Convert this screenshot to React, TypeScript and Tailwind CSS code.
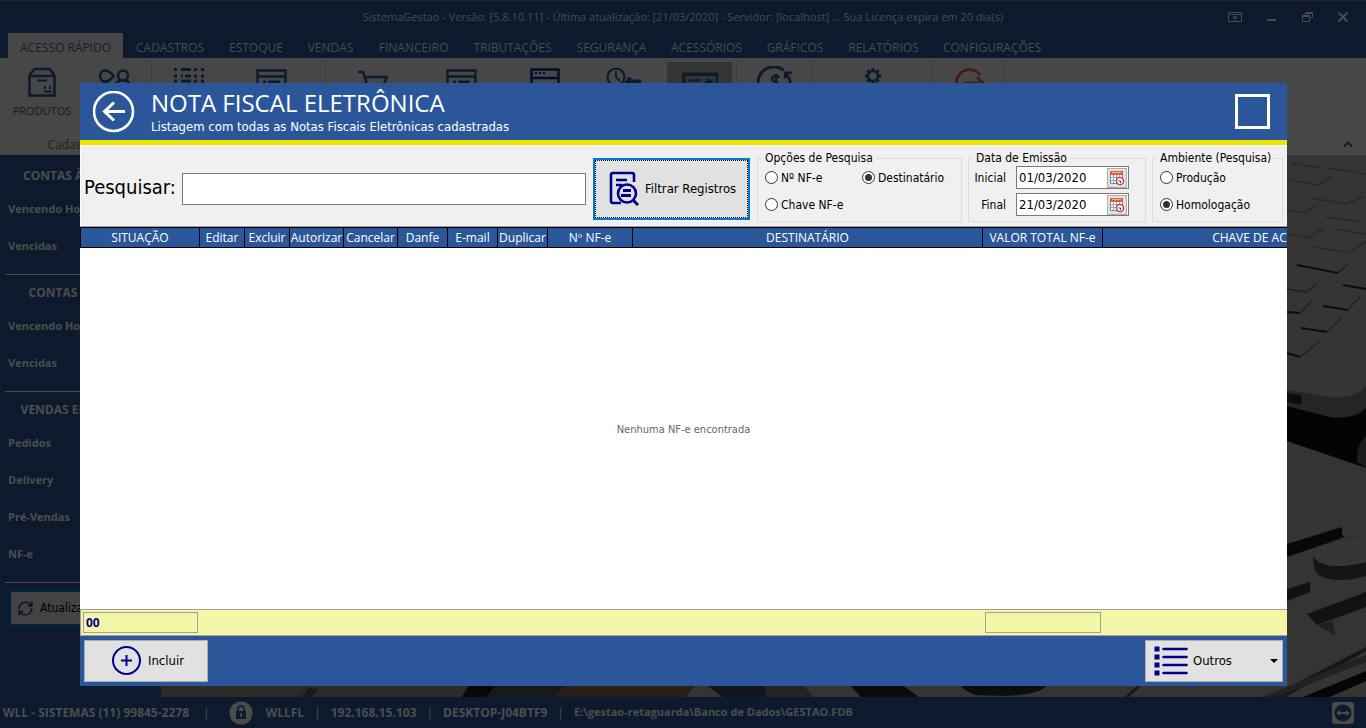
import React, { useState } from 'react';
import { RefreshCw } from 'lucide-react';

const MENU = [
    { label: 'ACESSO RÁPIDO', width: 'w-[115px]' },
    { label: 'CADASTROS', width: 'w-[94px]' },
    { label: 'ESTOQUE', width: 'w-[78px]' },
    { label: 'VENDAS', width: 'w-[71px]' },
    { label: 'FINANCEIRO', width: 'w-[95px]' },
    { label: 'TRIBUTAÇÕES', width: 'w-[103px]' },
    { label: 'SEGURANÇA', width: 'w-[95px]' },
    { label: 'ACESSÓRIOS', width: 'w-[95px]' },
    { label: 'GRÁFICOS', width: 'w-[82px]' },
    { label: 'RELATÓRIOS', width: 'w-[95px]' },
    { label: 'CONFIGURAÇÕES', width: 'w-[122px]' },
];

const SECTIONS = [
    { title: 'CONTAS À RECEBER', rows: ['Vencendo Hoje', 'Vencidas'] },
    { title: 'CONTAS À PAGAR', rows: ['Vencendo Hoje', 'Vencidas'] },
    { title: 'VENDAS EM ABERTO', rows: ['Pedidos', 'Delivery', 'Pré-Vendas', 'NF-e'] },
];

const COLUMNS = [
    { label: 'SITUAÇÃO', width: 'w-[119px]' },
    { label: 'Editar', width: 'w-[45px]' },
    { label: 'Excluir', width: 'w-[45px]' },
    { label: 'Autorizar', width: 'w-[54px]' },
    { label: 'Cancelar', width: 'w-[54px]' },
    { label: 'Danfe', width: 'w-[50px]' },
    { label: 'E-mail', width: 'w-[50px]' },
    { label: 'Duplicar', width: 'w-[50px]' },
    { label: 'Nº NF-e', width: 'w-[85px]' },
    { label: 'DESTINATÁRIO', width: 'w-[350px]' },
    { label: 'VALOR TOTAL NF-e', width: 'w-[120px]' },
    { label: 'CHAVE DE ACESSO', width: 'w-[323px]' },
];

const STATUS = [
    { text: 'WLLFL', style: 'ml-2' },
    { text: '192.168.15.103', style: '' },
    { text: 'DESKTOP-J04BTF9', style: '' },
    { text: 'E:\\gestao-retaguarda\\Banco de Dados\\GESTAO.FDB', style: 'text-[11px]' },
];

/* ---------- ícones ---------- */

const Icon: React.FC<{ children: React.ReactNode; className?: string }> = ({ children, className = 'size-8' }) => (
    <svg viewBox="0 0 32 32" fill="none" stroke="currentColor" strokeWidth="3" className={className}>
        {children}
    </svg>
);

const BoxIcon = () => (
    <Icon>
        <path d="M3.5 9v20.5h25V9M3.5 10h25M3.5 9l5-6h15l5 6" strokeWidth="2.6" />
        <path d="M11 14.5h10M19 20v3M24 20v3M18 25.5h8" strokeWidth="2" />
    </Icon>
);

const PeopleIcon = () => (
    <Icon>
        <path d="M16 10c-3-3-5-5.500-9-5.500a5 5.500 0 0 0 0 11c4 0 6-2.500 9-5.500z" strokeWidth="2.4" />
        <circle cx="25" cy="9.500" r="5" strokeWidth="2.5" />
        <path d="M1 26c0-12 14-12 14 0M18 18c3-5 11-5 14 0" strokeWidth="2.5" />
    </Icon>
);

const GridIcon = () => (
    <Icon>
        <path d="M1 3.5h3M8 3.5h10M21 3.5h3M28 3.5h3M1 10h3M8 10h2M12 10h6M21 10h3M28 10h3M1 15h3M8 15h10M21 15h3M28 15h3" />
    </Icon>
);

const WindowIcon = () => (
    <Icon>
        <path d="M2.500 4.500h28v26h-28zM2 10.500h28" strokeWidth="2.400" />
        <path d="M8 16h3M13 16h12M8 21h3M13 21h12" />
    </Icon>
);

const BrowserIcon = () => (
    <Icon>
        <path d="M2.500 3.500h27v26h-27zM2 12h28" strokeWidth="2.4" />
        <path d="M6 7h2M10 7h2M14 7h2" strokeWidth="2" />
    </Icon>
);

const CartIcon = () => (
    <Icon>
        <path d="M1 6h5l6 18h15M8 11h22l-4 9H11" strokeWidth="2.4" />
    </Icon>
);

const DeliveryIcon = () => (
    <Icon className="h-8 w-9">
        <circle cx="8" cy="11" r="8.500" strokeWidth="2.2" />
        <path d="M8 5v6l4 4" strokeWidth="1.800" />
        <path d="M17 16h5v-3h-3M23 17h10M24 15h9" strokeWidth="3" />
    </Icon>
);

const CertificateIcon = () => (
    <Icon className="size-9">
        <path d="M1.500 5.500h30v20h-30z" />
        <path d="M6 11h10M6 15h6" strokeWidth="2" />
        <path d="M19 14l5-5 5 5-5 5z" fill="currentColor" stroke="none" />
    </Icon>
);

const DollarIcon = () => (
    <Icon className="size-9">
        <path d="M2 20a14 14 0 0 1 22-16" strokeWidth="2.6" />
        <path d="M20 10c-4-3-8 0-6 3s8 2 6 6-7 2-8 0M17 7v14" strokeWidth="2.2" />
        <path d="M24 6h7M25 5v6M25 6c4 4 5 8 5 12" strokeWidth="2.4" />
    </Icon>
);

const GearIcon = () => (
    <Icon>
        <circle cx="16" cy="10" r="5" strokeWidth="2.4" />
        <path d="M16 2v3M16 15v3M8 10h3M21 10h3M10.300 4.300l2 2M19.700 13.700l2 2M10.300 15.700l2-2M19.700 6.300l2-2" strokeWidth="3" />
    </Icon>
);

const ExitIcon = () => (
    <Icon>
        <path d="M27 9A13 13 0 1 0 29 20" strokeWidth="2.6" />
        <path d="M11 17h16M24 11l6 6-6 6" strokeWidth="2.6" />
    </Icon>
);

const CalendarIcon = () => (
    <svg viewBox="0 0 16 16" className="size-4" fill="none">
        <path d="M1.500 3.500h12v10h-12z" fill="#fff" stroke="#7a86a8" />
        <path d="M4.500 5v8M7.500 5v8M10.500 5v8M2 7.500h11M2 10.500h11" stroke="#9aa4c0" />
        <path d="M1 1h13v4H1z" fill="#d8633f" />
        <path d="M3 2.500h9" stroke="#f3b49c" />
        <circle cx="11" cy="11" r="3.600" fill="#f7eeee" stroke="#b3434a" strokeWidth="1.400" />
        <path d="M9.500 11h2v2" stroke="#8a3038" />
    </svg>
);

const FilterIcon = () => (
    <svg viewBox="0 0 30 36" className="h-9 w-[30px]" fill="none" stroke="#00008b" strokeWidth="2.600">
        <path d="M25 11V4q0-2-2-2H4Q2 2 2 4v26q0 2 2 2h8" />
        <path d="M7 9h11M7 14h6" />
        <circle cx="18" cy="22.500" r="9" />
        <path d="M14 19.500h8M12 24.500h10" strokeWidth="3" />
        <path d="M24 29l5 5" strokeWidth="3" />
    </svg>
);

/* ---------- janela de fundo ---------- */

// foto do notebook atrás da janela
const Wallpaper = () => (
    <svg viewBox="161 155 1205 542" preserveAspectRatio="xMaxYMax slice" className="absolute inset-0 size-full">
        <rect x="161" y="155" width="1205" height="542" fill="#343433" />
        <path d="M1200 155h166v232l-36 10-43-7-87-20z" fill="#353535" />
        <g stroke="#272727" strokeWidth="1.500" fill="none">
            <path d="M1292 163l28 5M1328 168l38 6M1290 180l28 5 14-8M1310 198l37 6 16-8M1287 210l16 3 14-8M1326 217l34 5M1335 229l31 5M1288 234l20 4 16-10M1315 247l34 6 17-12" />
        </g>
        <g stroke="#0c0c0c" strokeWidth="2" fill="none" strokeLinejoin="round">
            <path d="M1297 265l41 8M1343 285l23 4M1323 306l25 4M1301 328l26 4M1287 353l13 4M1287 312l13 1" />
            <path d="M1338 273l11-10M1348 309l12-12M1327 332l15-14M1300 357l20-16M1300 313l13-14M1287 289l20 3 10-9" strokeWidth="1.500" stroke="#202020" />
        </g>
        <path d="M1287 390l43 7q25 2 36-11v22q-12 12-36 9l-43-11z" fill="#252524" />
        <path d="M1287 393l14 2v10l-14-3z" fill="#0c0c0c" />
        <path d="M1287 406l43 11q24 3 36-9v60l-79-27z" fill="#040404" />
        <path d="M1366 436q-10 8-9 26l9 6z" fill="#1b1c1e" />
        <path d="M1287 544l55-17v8l3 2-58 20z" fill="#080808" />
        <path d="M1366 537q-30 3-43 8-16 8-4 17 16 8 47 0v14q-28 8-46 0-10-8-5-24" fill="#141516" />
        <path d="M1366 537q-30 3-43 8-16 8-4 17 16 8 47 0z" fill="#363634" />
        <path d="M1287 589l23-7v10l-23 9z" fill="#101112" />
        <path d="M1307 614l59-22v15l-49 18z" fill="#111213" />
        <path d="M1317 625l16-4 2 14z" fill="#20201f" />
        <path d="M1270 697l96-50v4l-80 46z" fill="#171717" />
        <path d="M1303 697l63-26v10l-36 16z" fill="#050505" />
        <path d="M1262 697l104-42v7l-90 35z" fill="#222" />
        <path d="M1129 697l14-13h-4l-14 13z" fill="#161616" />
        <path d="M161 680h330v17h-330z" fill="#2b2b28" />
        <path d="M298 697l12-13M303 697l6-9 8 2-6 7z" stroke="#171716" fill="#1a1a19" />
        <path d="M462 697l10-17h30l-14 17z" fill="#070707" />
        <path d="M500 680h80l-14 17h-80z" fill="#161819" />
        <path d="M570 680h130l-14 17H555z" fill="#2a1e1b" />
        <path d="M700 680h100l12 17H722z" fill="#12161a" />
        <path d="M765 680h34l14 17h-48z" fill="#232323" />
        <path d="M845 680h50l24 17h-58z" fill="#0a0a0a" />
        <path d="M960 680h95l-14 10q-20 8-65 5-17-5-16-15z" fill="#0b0d0e" />
    </svg>
);

const RibbonGroup: React.FC<{ children: React.ReactNode; label?: string }> = ({ children, label }) => (
    <div className="flex flex-col justify-between border-r border-[#3c3c3c] pb-[2px]">
        <div className="flex">{children}</div>
        {label && <span className="text-center leading-4">{label}</span>}
    </div>
);

const RibbonButton: React.FC<{ children: React.ReactNode; width: string; label?: string; color?: string }> = ({
    children,
    width,
    label,
    color = 'text-[#0d1a2e]',
}) => (
    <button type="button" className={`flex h-[70px] flex-col items-center pt-[6px] ${width} ${color}`}>
        {children}
        {label && <span className="mt-1 text-[11px] leading-[18px] text-[#161616]">{label}</span>}
    </button>
);

const TopBar = () => (
    <header className="border-t border-[#262626] bg-[#0d1a2e] text-[#4b4b4b]">
        <div className="flex h-8 items-center">
            <h1 className="flex-1 pl-[150px] text-center text-[11px]">
                SistemaGestao - Versão: [5.8.10.11] - Última atualização: [21/03/2020] - Servidor: [localhost] ... Sua Licença expira em 20 dia(s)
            </h1>
            <div className="flex w-[150px] justify-end gap-[22px] pr-4">
                <button type="button" aria-label="Ocultar menu">
                    <svg viewBox="0 0 14 12" className="h-3 w-3.5" fill="none" stroke="currentColor">
                        <path d="M.5 1.500h13v9H.5zM0 3.500h14M7 10V5.500M4.500 7.500L7 5l2.500 2.500" />
                    </svg>
                </button>
                <button type="button" aria-label="Minimizar">
                    <svg viewBox="0 0 14 12" className="h-3 w-3.5">
                        <path d="M3 8h9v2H3z" fill="currentColor" />
                    </svg>
                </button>
                <button type="button" aria-label="Restaurar">
                    <svg viewBox="0 0 14 12" className="h-3 w-3.5" fill="none" stroke="currentColor">
                        <path d="M2.500 5.500h7v5h-7zM2 4.500h8M5.500 4V1.500h7v5H10M5 2.500h8" />
                    </svg>
                </button>
                <button type="button" aria-label="Fechar">
                    <svg viewBox="0 0 14 12" className="h-3 w-3.5" fill="none" stroke="currentColor" strokeWidth="2">
                        <path d="M2.500 1.500l9 9M11.500 1.500l-9 9" />
                    </svg>
                </button>
            </div>
        </div>
        <nav className="flex h-[25px] pl-2">
            {MENU.map((item, i) => (
                <button
                    key={item.label}
                    type="button"
                    className={`shrink-0 pt-[5px] text-center ${item.width} ${i === 0 ? 'bg-[#474747] text-[#0f1d33]' : ''}`}
                >
                    {item.label}
                </button>
            ))}
        </nav>
        <div className="flex h-[97px] bg-[#474747] pt-[2px] text-[#1f1f1f]">
            <RibbonGroup label="Cadastros">
                <RibbonButton width="ml-[7px] w-[70px]" label="PRODUTOS"><BoxIcon /></RibbonButton>
                <RibbonButton width="w-[74px]" label="PESSOAS"><PeopleIcon /></RibbonButton>
            </RibbonGroup>
            <RibbonGroup>
                <RibbonButton width="w-[74px]"><GridIcon /></RibbonButton>
                <RibbonButton width="mr-[9px] w-[90px]"><WindowIcon /></RibbonButton>
            </RibbonGroup>
            <RibbonGroup>
                <RibbonButton width="w-[94px]"><CartIcon /></RibbonButton>
                <RibbonButton width="w-[82px]"><WindowIcon /></RibbonButton>
                <RibbonButton width="w-[86px]" color="text-[#060a2c]"><BrowserIcon /></RibbonButton>
                <RibbonButton width="w-[72px]"><DeliveryIcon /></RibbonButton>
                <RibbonButton width="mt-[2px] mr-1 ml-[7px] w-[65px] bg-[#343434]"><CertificateIcon /></RibbonButton>
            </RibbonGroup>
            <RibbonGroup>
                <RibbonButton width="w-[75px]"><DollarIcon /></RibbonButton>
            </RibbonGroup>
            <RibbonGroup>
                <RibbonButton width="w-[119px]"><GearIcon /></RibbonButton>
            </RibbonGroup>
            <RibbonGroup>
                <RibbonButton width="w-[71px]" color="text-[#481813]"><ExitIcon /></RibbonButton>
            </RibbonGroup>
            <button type="button" aria-label="Recolher" className="mt-auto mr-[13px] mb-2 ml-auto">
                <svg viewBox="0 0 10 6" className="h-1.5 w-2.5" fill="none" stroke="#1a1a1a" strokeWidth="2">
                    <path d="M1 5.500l4-4 4 4" />
                </svg>
            </button>
        </div>
    </header>
);

const Sidebar = () => (
    <aside className="w-[161px] shrink-0 bg-[#0d1a2e] pt-[3px] text-[11px] font-bold text-[#4d4d4d]">
        {SECTIONS.map((section) => (
            <section key={section.title} className="px-2">
                <h2 className="h-[33px] text-center text-xs leading-[35px]">{section.title}</h2>
                {section.rows.map((row) => (
                    <p key={row} className="h-[37px] leading-[35px]">{row}</p>
                ))}
                <hr className="-mx-[3px] mt-[9px] border-[#4a4a4a]" />
            </section>
        ))}
        <button
            type="button"
            className="mt-[7px] ml-[9px] flex h-9 w-[140px] items-center border-2 border-[#00233f] bg-[#434343] pl-[6px] font-['DejaVu_Sans_Condensed','DejaVu_Sans',sans-serif] text-xs font-normal text-black"
        >
            <RefreshCw className="mr-[6px] size-[17px] text-[#0a1024]" strokeWidth={2} />
            Atualizar
        </button>
    </aside>
);

const StatusBar = () => (
    <footer className="flex h-[31px] items-center bg-[#0d1a2e] pr-3 pl-[3px] font-bold text-[#4d4d4d]">
        <span>WLL - SISTEMAS (11) 99845-2278</span>
        <span className="mx-[14px] font-normal">|</span>
        <svg viewBox="0 0 24 24" className="mx-[5px] size-6 shrink-0">
            <circle cx="12" cy="12" r="11.500" fill="#4b4b4b" />
            <path d="M7 10h10v8H7z" fill="#0d1a2e" />
            <path d="M9 10V8a3 3 0 0 1 6 0v2" fill="none" stroke="#0d1a2e" strokeWidth="1.600" />
            <path d="M12 12v4" stroke="#4b4b4b" strokeWidth="1.600" />
        </svg>
        {STATUS.map(({ text, style }, i) => (
            <React.Fragment key={text}>
                {i > 0 && <span className="mx-[10px] font-normal">|</span>}
                <span className={style}>{text}</span>
            </React.Fragment>
        ))}
        <svg viewBox="0 0 22 22" className="ml-auto size-[22px] shrink-0">
            <rect width="22" height="22" rx="3" fill="#4a4a4a" />
            <circle cx="11" cy="11" r="8.500" fill="#0d1a2e" />
            <path d="M4 11l4-3v2h6V8l4 3-4 3v-2H8v2z" fill="#4a4a4a" />
        </svg>
    </footer>
);

/* ---------- janela de NF-e ---------- */

interface RadioProps {
    name: string;
    label: string;
    value: string;
    onChange: (value: string) => void;
}

const Radio: React.FC<RadioProps> = ({ name, label, value, onChange }) => (
    <label className="flex h-[27px] items-center gap-[3px] whitespace-nowrap">
        <input
            type="radio"
            name={name}
            checked={value === label}
            onChange={() => onChange(label)}
            className="grid size-[13px] shrink-0 appearance-none place-content-center rounded-full border border-[#333] bg-white before:size-[7px] before:rounded-full checked:before:bg-[#333]"
        />
        {label}
    </label>
);

const Group: React.FC<{ title: string; className: string; children: React.ReactNode }> = ({ title, className, children }) => (
    <fieldset className={`mt-[4px] h-[72px] shrink-0 border border-[#dcdcdc] ${className}`}>
        <legend className="ml-1 px-[3px] leading-4 whitespace-nowrap">{title}</legend>
        {children}
    </fieldset>
);

const DateField: React.FC<{ id: string; label: string; value: string }> = ({ id, label, value }) => (
    <div className="flex items-center">
        <label htmlFor={id} className="w-[37px] text-right">{label}</label>
        <div className="ml-[10px] flex h-[23px] w-[113px] items-center border border-[#7a7a7a] bg-white pr-px">
            <input id={id} type="text" defaultValue={value} className="h-full w-0 flex-1 pl-[2px] text-[13px] outline-none" />
            <button type="button" aria-label={`Calendário ${label}`} className="flex size-5 items-center justify-center border border-[#adadad] bg-[#e1e1e1]">
                <CalendarIcon />
            </button>
        </div>
    </div>
);

const SearchPanel = () => {
    const [option, setOption] = useState('Destinatário');
    const [environment, setEnvironment] = useState('Homologação');

    return (
        <form className="flex h-[82px] items-start border-t border-b border-l border-t-white border-b-[#a0a0a0] border-l-white bg-[#f0f0f0] pr-1 pl-[3px]" onSubmit={(e) => e.preventDefault()}>
            <label htmlFor="pesquisar" className="mt-[27px] w-[98px] shrink-0 text-xl leading-7">Pesquisar:</label>
            <input id="pesquisar" type="text" className="mt-[27px] h-8 min-w-0 flex-1 border border-[#7a7a7a] bg-white px-1 text-xl outline-none" />
            <button
                type="submit"
                className="mt-3 ml-[7px] flex h-[62px] w-[157px] shrink-0 items-center border-2 border-[#0078d7] bg-[#e1e1e1] pl-[14px] text-[13px] outline-1 -outline-offset-3 outline-dotted outline-black"
            >
                <FilterIcon />
                <span className="ml-1.5">Filtrar Registros</span>
            </button>
            <Group title="Opções de Pesquisa" className="ml-[7px] w-[205px]">
                <div className="-mt-[2px] grid grid-cols-[97px_1fr] pl-[7px]">
                    <Radio name="opcao" label="Nº NF-e" value={option} onChange={setOption} />
                    <Radio name="opcao" label="Destinatário" value={option} onChange={setOption} />
                    <Radio name="opcao" label="Chave NF-e" value={option} onChange={setOption} />
                </div>
            </Group>
            <Group title="Data de Emissão" className="ml-[6px] w-[178px]">
                <div className="flex flex-col gap-1">
                    <DateField id="inicial" label="Inicial" value="01/03/2020" />
                    <DateField id="final" label="Final" value="21/03/2020" />
                </div>
            </Group>
            <Group title="Ambiente (Pesquisa)" className="ml-[6px] w-[131px]">
                <div className="-mt-[2px] pl-[7px]">
                    <Radio name="ambiente" label="Produção" value={environment} onChange={setEnvironment} />
                    <Radio name="ambiente" label="Homologação" value={environment} onChange={setEnvironment} />
                </div>
            </Group>
        </form>
    );
};

const InvoiceWindow = () => (
    <section className="flex flex-1 flex-col overflow-hidden bg-white font-['DejaVu_Sans_Condensed','DejaVu_Sans',sans-serif] text-black">
        <div className="flex h-[62px] items-center border-b-5 border-[#ebe800] bg-[#2b579a] pr-[17px] pl-[13px] text-white">
            <button type="button" aria-label="Voltar">
                <svg viewBox="0 0 42 42" className="size-[42px]" fill="none" stroke="currentColor" strokeWidth="2.600">
                    <circle cx="20.500" cy="20.500" r="19.500" />
                    <path d="M32 20.500H12M21 11.500l-9.500 9 9.500 9" strokeWidth="3" />
                </svg>
            </button>
            <div className="ml-4 flex-1 pt-[2px]">
                <h2 className="font-['Open_Sans',sans-serif] text-2xl leading-7">NOTA FISCAL ELETRÔNICA</h2>
                <p className="text-[13px] leading-5">Listagem com todas as Notas Fiscais Eletrônicas cadastradas</p>
            </div>
            <button type="button" aria-label="Maximizar" className="size-[35px] border-3 border-white" />
        </div>
        <SearchPanel />
        <div className="overflow-hidden">
            <table className="w-[1346px] table-fixed border-separate border-spacing-0 border-y border-l border-black bg-[#2b579a] font-['Open_Sans',sans-serif] text-white">
                <thead>
                    <tr>
                        {COLUMNS.map((column) => (
                            <th key={column.label} scope="col" className={`h-[19px] border-r border-black p-0 font-normal leading-[19px] whitespace-nowrap ${column.width}`}>
                                {column.label}
                            </th>
                        ))}
                    </tr>
                </thead>
            </table>
        </div>
        <div className="flex flex-1 items-center justify-center pt-1 text-[11px] text-[#666]">Nenhuma NF-e encontrada</div>
        <div className="flex h-[27px] shrink-0 items-center border border-r-0 border-[#a0a0a0] bg-[#f3f6a6] pl-[2px]">
            <output className="h-[21px] w-[115px] border border-[#a0a0a0] pl-[2px] font-['Open_Sans',sans-serif] font-bold leading-5 text-[#00008b]">00</output>
            <output className="ml-[787px] h-[21px] w-[116px] border border-[#a0a0a0]" />
        </div>
        <div className="flex h-[50px] shrink-0 items-center justify-between bg-[#2b579a] px-1 text-[13px]">
            <button type="button" className="flex h-[42px] w-[124px] items-center border border-[#adadad] bg-[#e1e1e1] pl-[27px]">
                <svg viewBox="0 0 30 30" className="size-[30px]" fill="none" stroke="#00008b" strokeWidth="2">
                    <circle cx="14.500" cy="14.500" r="13.500" />
                    <path d="M14.500 9v11M9 14.500h11" />
                </svg>
                <span className="ml-[6px]">Incluir</span>
            </button>
            <button type="button" className="flex h-[42px] w-[138px] items-center border border-[#adadad] bg-[#e1e1e1] pr-1 pl-2">
                <svg viewBox="0 0 34 30" className="h-[30px] w-[34px]" fill="none" stroke="#00008b">
                    <path d="M.5 3h5M.5 11h5M.5 19h5M.5 27h5" strokeWidth="5" />
                    <path d="M9.500 3h23M9.500 11h23M9.500 19h23M9.500 27h23" strokeWidth="2.600" strokeLinecap="round" />
                </svg>
                <span className="ml-[5px]">Outros</span>
                <svg viewBox="0 0 8 4" className="ml-auto h-1 w-2">
                    <path d="M0 0h8L4 4z" />
                </svg>
            </button>
        </div>
    </section>
);

const App: React.FC = () => (
    <div className="relative flex min-h-screen flex-col overflow-hidden font-['Open_Sans',sans-serif] text-xs">
        <TopBar />
        <div className="flex flex-1">
            <Sidebar />
            <main className="relative flex-1 overflow-hidden bg-[#343433]">
                <Wallpaper />
            </main>
        </div>
        <StatusBar />
        <div className="absolute inset-0 flex pt-[83px] pr-[79px] pb-[42px] pl-20">
            <InvoiceWindow />
        </div>
    </div>
);

export default App;
